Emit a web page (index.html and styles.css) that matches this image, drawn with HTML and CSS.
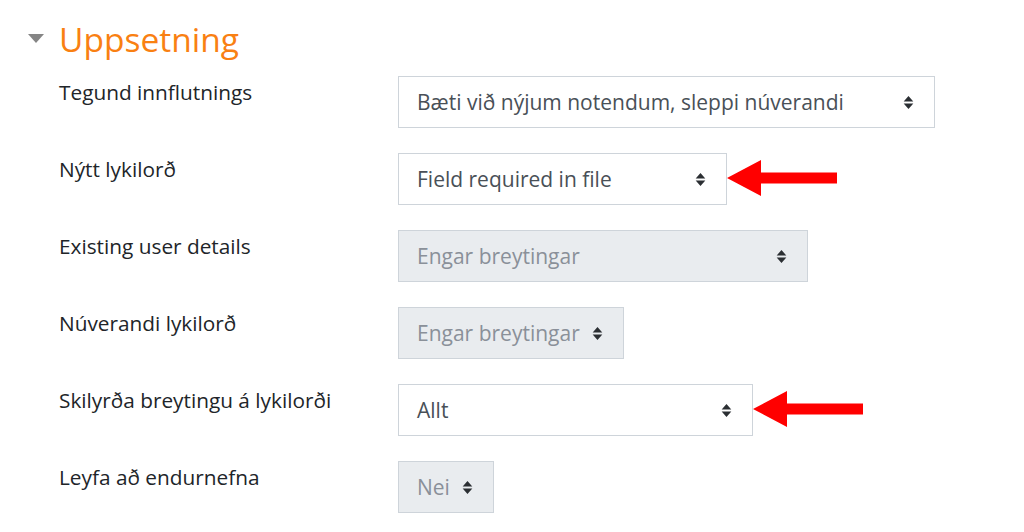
FILE: index.html
```html
<!DOCTYPE html>
<html lang="is">
<head>
<meta charset="utf-8">
<title>Uppsetning</title>
<link rel="stylesheet" href="styles.css">
</head>
<body>
<div class="page">
  <div class="legend">
    <span class="caret"></span>
    <h3 class="legend-title">Uppsetning</h3>
  </div>
  <div class="form">
    <div class="row">
      <div class="label">Tegund innflutnings</div>
      <div class="control">
        <div class="select w-import"><span class="val">Bæti við nýjum notendum, sleppi núverandi</span><svg class="updown" viewBox="0 0 10 14"><path d="M0.5 6 L5 1 L9.5 6 Z M0.5 8 L5 13 L9.5 8 Z"/></svg></div>
      </div>
    </div>
    <div class="row">
      <div class="label">Nýtt lykilorð</div>
      <div class="control">
        <div class="select w-pass"><span class="val">Field required in file</span><svg class="updown" viewBox="0 0 10 14"><path d="M0.5 6 L5 1 L9.5 6 Z M0.5 8 L5 13 L9.5 8 Z"/></svg></div>
        <svg class="arrow" viewBox="0 0 112 38"><path d="M0 18 L34 0 L34 12.5 L110 12.5 L110 23.5 L34 23.5 L34 36 Z"/></svg>
      </div>
    </div>
    <div class="row">
      <div class="label">Existing user details</div>
      <div class="control">
        <div class="select disabled w-exist"><span class="val">Engar breytingar</span><svg class="updown" viewBox="0 0 10 14"><path d="M0.5 6 L5 1 L9.5 6 Z M0.5 8 L5 13 L9.5 8 Z"/></svg></div>
      </div>
    </div>
    <div class="row">
      <div class="label">Núverandi lykilorð</div>
      <div class="control">
        <div class="select disabled"><span class="val">Engar breytingar</span><svg class="updown" viewBox="0 0 10 14"><path d="M0.5 6 L5 1 L9.5 6 Z M0.5 8 L5 13 L9.5 8 Z"/></svg></div>
      </div>
    </div>
    <div class="row">
      <div class="label">Skilyrða breytingu á lykilorði</div>
      <div class="control">
        <div class="select w-force"><span class="val">Allt</span><svg class="updown" viewBox="0 0 10 14"><path d="M0.5 6 L5 1 L9.5 6 Z M0.5 8 L5 13 L9.5 8 Z"/></svg></div>
        <svg class="arrow" viewBox="0 0 112 38"><path d="M0 18 L34 0 L34 12.5 L110 12.5 L110 23.5 L34 23.5 L34 36 Z"/></svg>
      </div>
    </div>
    <div class="row">
      <div class="label">Leyfa að endurnefna</div>
      <div class="control">
        <div class="select disabled"><span class="val">Nei</span><svg class="updown" viewBox="0 0 10 14"><path d="M0.5 6 L5 1 L9.5 6 Z M0.5 8 L5 13 L9.5 8 Z"/></svg></div>
      </div>
    </div>
  </div>
</div>
</body>
</html>
```
FILE: styles.css
```css
html, body {
  margin: 0;
  padding: 0;
  background: #ffffff;
}
body {
  font-family: "Open Sans", "Noto Sans", "Liberation Sans", sans-serif;
  color: #212529;
}
.page {
  padding: 16px 0 0 28px;
}
.legend {
  display: flex;
  align-items: center;
  height: 46px;
}
.caret {
  width: 0;
  height: 0;
  border-left: 8px solid transparent;
  border-right: 8px solid transparent;
  border-top: 9px solid #858585;
  margin-right: 15px;
  margin-top: -2px;
}
.legend-title {
  margin: 0;
  font-weight: 400;
  font-size: 33.5px;
  line-height: 46px;
  color: #f98012;
}
.form {
  display: flex;
  flex-direction: column;
  gap: 25px;
  margin-top: 14px;
  padding-left: 31px;
}
.row {
  display: grid;
  grid-template-columns: 339px 1fr;
  align-items: start;
}
.label {
  font-size: 20.8px;
  line-height: 30px;
  padding-top: 1px;
  color: #212529;
}
.control {
  display: flex;
  align-items: center;
  gap: 0;
}
.select {
  box-sizing: border-box;
  height: 52px;
  display: inline-flex;
  align-items: center;
  justify-content: space-between;
  gap: 12px;
  padding: 0 20px 0 18px;
  border: 1px solid #ced4da;
  background: #ffffff;
  color: #495057;
  font-size: 21px;
}
.select.disabled {
  background: #e9ecef;
  color: #8a9099;
}
.w-import { width: 537px; }
.w-pass { width: 329px; }
.w-exist { width: 410px; }
.w-force { width: 355px; }
.val {
  white-space: nowrap;
}
.updown {
  width: 11px;
  height: 15px;
  fill: #2b2f33;
  flex: none;
}
.arrow {
  width: 112px;
  height: 38px;
  fill: #ff0000;
  flex: none;
}
```
